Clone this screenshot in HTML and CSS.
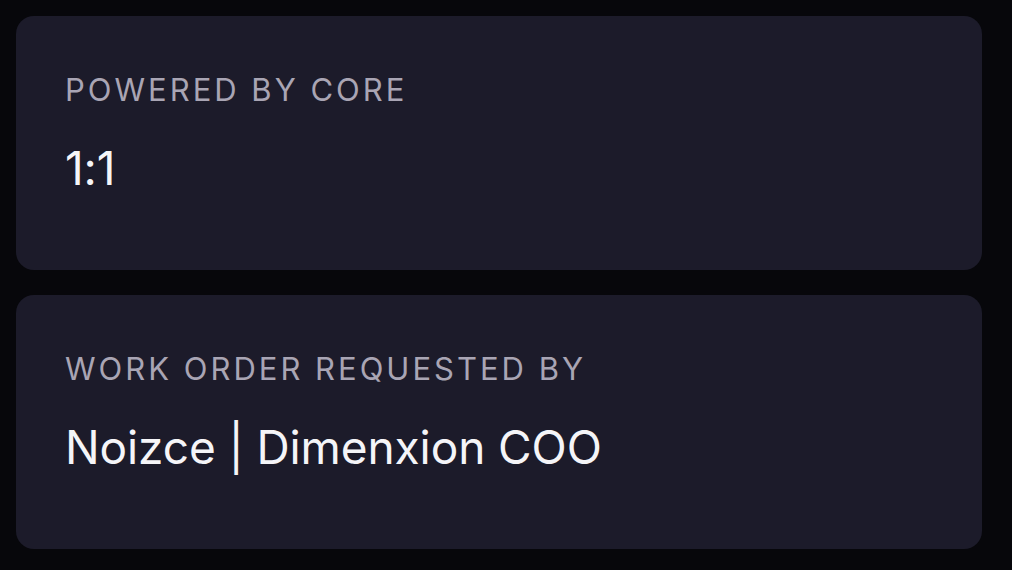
FILE: index.html
```html
<!DOCTYPE html>
<html>
<head>
<meta charset="utf-8">
<link rel="stylesheet" href="styles.css">
</head>
<body>
<main class="stack">
  <section class="card">
    <div class="label">POWERED BY CORE</div>
    <div class="value">1:1</div>
  </section>
  <section class="card">
    <div class="label">WORK ORDER REQUESTED BY</div>
    <div class="value">Noizce | Dimenxion COO</div>
  </section>
</main>
</body>
</html>
```
FILE: styles.css
```css
html, body {
  margin: 0;
  padding: 0;
  background: #07070b;
}
body {
  font-family: Inter, "Noto Sans", sans-serif;
  width: 1012px;
  height: 570px;
  overflow: hidden;
}
.stack {
  display: flex;
  flex-direction: column;
  gap: 25px;
  padding: 16px 30px 0 16px;
}
.card {
  background: #1c1b2a;
  border-radius: 18px;
  height: 254px;
  box-sizing: border-box;
  padding: 58px 49px 0 49px;
  display: flex;
  flex-direction: column;
  gap: 40px;
}
.label {
  font-size: 31px;
  line-height: 31px;
  color: #a9a5b4;
  letter-spacing: 3px;
  font-weight: 400;
}
.value {
  font-size: 46px;
  line-height: 46px;
  color: #f5f5f8;
  font-weight: 400;
  letter-spacing: -0.1px;
}
```
